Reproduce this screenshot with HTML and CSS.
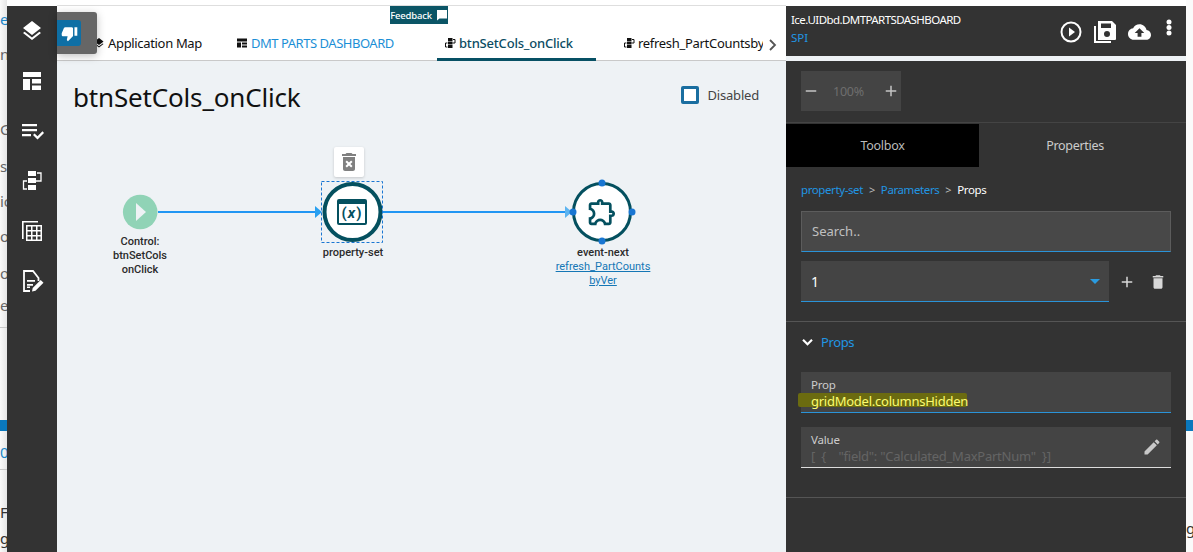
FILE: index.html
```html
<!DOCTYPE html>
<html lang="en">
<head>
<meta charset="utf-8">
<title>btnSetCols_onClick</title>
<link rel="stylesheet" href="styles.css">
</head>
<body>
<div class="app">
  <div class="edge edge-left">
    <span class="frag frag-blue f1">e</span>
    <span class="frag f2">n</span>
    <span class="frag f3">G</span>
    <span class="frag f4">s</span>
    <span class="frag f5">ic</span>
    <span class="frag f6">or</span>
    <span class="frag f7">or</span>
    <span class="frag f8">e</span>
    <div class="edge-rule r1"></div>
    <div class="edge-band b1"></div>
    <span class="frag frag-blue f9">01</span>
    <div class="edge-rule r2"></div>
    <span class="frag f10">F</span>
    <span class="frag f11">g</span>
  </div>

  <nav class="sidebar">
    <svg class="side-icon" viewBox="0 0 24 24"><path d="M11.99 18.54l-7.37-5.73L3 14.07l9 7 9-7-1.63-1.27-7.38 5.74zM12 16l7.36-5.73L21 9l-9-7-9 7 1.63 1.27L12 16z"/></svg>
    <svg class="side-icon" viewBox="0 0 24 24"><path d="M3 3h18v5H3zM3 10h7v11H3zM12 10h9v4.5h-9zM12 16.5h9V21h-9z"/></svg>
    <svg class="side-icon" viewBox="0 0 24 24"><path d="M2 5h15v2.2H2zM2 10h15v2.2H2zM2 15h9v2.2H2zM13 16l1.6-1.6 2.9 2.9 5-5L24 14l-6.500 6.500z"/></svg>
    <svg class="side-icon" viewBox="0 0 24 24"><path d="M8 2h8v5H8zM8 9h8v5H8zM8 16h8v5H8z"/><path d="M17 4h4v8h-5M7 12H3.500v8H7" fill="none" stroke="#fff" stroke-width="1.300"/></svg>
    <svg class="side-icon" viewBox="0 0 24 24"><path d="M2 2h16v1.600H3.600V20H2z"/><path fill-rule="evenodd" d="M6 6h16v16H6zM7.500 7.500V11h3.500V7.500zM12.500 7.500V11h3.500V7.500zM17.500 7.500V11h3V7.500zM7.500 12.500V16h3.500v-3.500zM12.500 12.500V16h3.500v-3.500zM17.500 12.500V16h3v-3.500zM7.500 17.500v3h3.500v-3zM12.500 17.500v3h3.500v-3zM17.500 17.500v3h3v-3z"/></svg>
    <svg class="side-icon" viewBox="0 0 24 24"><path d="M10 22H4V2h9l5.500 7v3" fill="none" stroke="#fff" stroke-width="1.800"/><path d="M7 11h8v1.700H7zM7 15h6v1.700H7zM7 19h3v-1.500H7zM12 22.500l.7-3.500 8-8 2.800 2.800-8 8z"/></svg>
  </nav>

  <main class="main">
    <header class="tabs">
      <div class="tab tab-first">
        <svg class="tab-icon" viewBox="0 0 24 24"><path d="M11.990 18.540l-7.370-5.730L3 14.070l9 7 9-7-1.630-1.270-7.380 5.740zM12 16l7.360-5.730L21 9l-9-7-9 7 1.630 1.270L12 16z"/></svg>
        <span>Application Map</span>
      </div>
      <div class="tab tab-link">
        <svg class="tab-icon" viewBox="0 0 24 24"><path d="M2 3h20v6H2zM2 11h8v10H2zM12 11h10v4H12zM12 17h10v4H12z"/></svg>
        <span>DMT PARTS DASHBOARD</span>
      </div>
      <div class="tab tab-active">
        <svg class="tab-icon" viewBox="0 0 24 24"><path d="M8 2h9v6H8zM8 9h9v6H8zM8 16h9v6H8z"/><path d="M18 5h4v7h-5M7 12H3v8h4" fill="none" stroke="#111" stroke-width="2"/></svg>
        <span>btnSetCols_onClick</span>
      </div>
      <div class="tab tab-clip">
        <svg class="tab-icon" viewBox="0 0 24 24"><path d="M8 2h9v6H8zM8 9h9v6H8zM8 16h9v6H8z"/><path d="M18 5h4v7h-5M7 12H3v8h4" fill="none" stroke="#111" stroke-width="2"/></svg>
        <span class="clip-text">refresh_PartCountsbyVer</span>
      </div>
      <svg class="tab-next" viewBox="0 0 10 14"><path d="M2 2l5 5-5 5" fill="none" stroke="#555" stroke-width="1.800"/></svg>
      <div class="feedback">
        <span>Feedback</span>
        <svg viewBox="0 0 24 24"><path d="M2 2h20v17H7l-5 4z"/></svg>
      </div>
    </header>

    <section class="canvas">
      <div class="canvas-head">
        <h1>btnSetCols_onClick</h1>
        <label class="disabled-box"><span class="check"></span><span>Disabled</span></label>
      </div>

      <svg class="wires" viewBox="0 0 729 491">
        <path d="M101 151H261M326 151H510" stroke="#2196f3" stroke-width="2" fill="none"/>
        <path d="M258 145l7 6-7 6z" fill="#29a0f0"/>
        <path d="M508 145l7 6-7 6z" fill="#5db4f0"/>
        <circle cx="83.200" cy="151" r="17.300" fill="#90d3b6"/>
        <path d="M79 142l10 9-10 9z" fill="#eef2f5"/>
        <circle cx="295.500" cy="151" r="28" fill="#fff" stroke="#04505f" stroke-width="4"/>
        <rect x="264.500" y="120.500" width="61" height="61" fill="none" stroke="#1976d2" stroke-dasharray="3 2"/>
        <rect x="280" y="138" width="30" height="26" rx="2" fill="#04505f"/>
        <rect x="282" y="143" width="26" height="19" fill="#fff"/>
        <circle cx="545" cy="151" r="28.500" fill="#fff" stroke="#04505f" stroke-width="3"/>
        <g transform="translate(529 134.500) scale(1.350)">
          <path d="M10.500 4.500c.28 0 .5.22.5.5v2h6v6h2c.28 0 .5.22.5.5s-.22.5-.5.5h-2v6h-2.120c-.68-1.750-2.390-3-4.380-3s-3.700 1.250-4.380 3H4v-2.120c1.750-.68 3-2.390 3-4.380 0-1.990-1.240-3.700-2.990-4.380L4 7h6V5c0-.28.22-.5.5-.5m0-2C9.120 2.500 8 3.620 8 5H4c-1.100 0-1.990.9-1.990 2v3.800h.29c1.490 0 2.700 1.210 2.700 2.700s-1.210 2.700-2.700 2.700H2V20c0 1.100.9 2 2 2h3.800v-.3c0-1.490 1.210-2.700 2.700-2.700s2.700 1.210 2.700 2.700v.3H17c1.100 0 2-.9 2-2v-4c1.380 0 2.500-1.120 2.500-2.500S20.380 11 19 11V7c0-1.100-.9-2-2-2h-4c0-1.380-1.120-2.500-2.500-2.500z" fill="#04505f"/>
        </g>
        <circle cx="545" cy="122" r="3.500" fill="#1976d2"/>
        <circle cx="545" cy="180" r="3.500" fill="#1976d2"/>
        <circle cx="516" cy="151" r="3.500" fill="#1976d2"/>
        <circle cx="575" cy="151" r="3.500" fill="#1976d2"/>
      </svg>

      <div class="node-card">
        <svg viewBox="0 0 24 24"><path d="M6 19c0 1.100.9 2 2 2h8c1.100 0 2-.9 2-2V7H6v12zm2.460-7.120l1.410-1.410L12 12.590l2.120-2.120 1.410 1.410L13.410 14l2.120 2.120-1.410 1.410L12 15.410l-2.120 2.120-1.410-1.410L10.590 14l-2.130-2.120zM15.500 4l-1-1h-5l-1 1H5v2h14V4z"/></svg>
      </div>
      <span class="var-glyph">(<em>x</em>)</span>
      <div class="node-label l-start">Control:<br>btnSetCols<br>onClick</div>
      <div class="node-label l-set">property-set</div>
      <div class="node-label l-event">event-next<br><a>refresh_PartCounts<br>byVer</a></div>
    </section>
  </main>

  <aside class="panel">
    <header class="panel-head">
      <div class="panel-title">
        <div class="panel-name">Ice.UIDbd.DMTPARTSDASHBOARD</div>
        <div class="panel-sub">SPI</div>
      </div>
      <div class="panel-actions">
        <svg class="act" viewBox="0 0 24 24"><circle cx="12" cy="12" r="9.500" fill="none" stroke="#fff" stroke-width="2"/><path d="M10 7.500l6 4.500-6 4.500z"/></svg>
        <svg class="act" viewBox="0 0 24 24"><path d="M1 6h2v15h15v2H1z"/><path fill-rule="evenodd" d="M5 1h14l4 4v14a1 1 0 0 1-1 1H5zM8 3.500V8h10V3.500zM14 11a3 3 0 1 0 0 6 3 3 0 0 0 0-6z"/></svg>
        <svg class="act act-cloud" viewBox="0 0 24 24"><path d="M19.350 10.040C18.670 6.590 15.640 4 12 4 9.110 4 6.600 5.640 5.350 8.040 2.340 8.360 0 10.910 0 14c0 3.310 2.690 6 6 6h13c2.760 0 5-2.240 5-5 0-2.640-2.050-4.780-4.650-4.960zM14 13v4h-4v-4H7l5-5 5 5h-3z"/></svg>
        <svg class="act act-more" viewBox="0 0 6 17"><circle cx="3" cy="3" r="2.500"/><circle cx="3" cy="8.500" r="2.500"/><circle cx="3" cy="14" r="2.500"/></svg>
      </div>
    </header>
    <div class="panel-gap"></div>

    <div class="zoom-row">
      <div class="zoom-box">
        <svg class="zoom-btn" viewBox="0 0 24 24"><path d="M19 13H5v-2h14v2z"/></svg>
        <span class="zoom-val">100%</span>
        <svg class="zoom-btn" viewBox="0 0 24 24"><path d="M19 13h-6v6h-2v-6H5v-2h6V5h2v6h6v2z"/></svg>
      </div>
    </div>

    <div class="panel-tabs">
      <div class="ptab ptab-on">Toolbox</div>
      <div class="ptab ptab-off">Properties</div>
    </div>

    <div class="crumbs">
      <span class="crumb-link">property-set</span><span class="sep">&gt;</span><span class="crumb-link">Parameters</span><span class="sep">&gt;</span><span class="crumb-now">Props</span>
    </div>

    <div class="search">Search..</div>

    <div class="select-row">
      <div class="select"><span>1</span><i class="caret"></i></div>
      <svg class="row-icon" viewBox="0 0 24 24"><path d="M19 13h-6v6h-2v-6H5v-2h6V5h2v6h6v2z"/></svg>
      <svg class="row-icon" viewBox="0 0 24 24"><path d="M6 19c0 1.100.9 2 2 2h8c1.100 0 2-.9 2-2V7H6v12zM19 4h-3.500l-1-1h-5l-1 1H5v2h14V4z"/></svg>
    </div>

    <section class="props">
      <div class="props-head">
        <svg viewBox="0 0 14 10"><path d="M2 2l5 5 5-5" fill="none" stroke="#fff" stroke-width="2.400"/></svg>
        <span>Props</span>
      </div>
      <div class="field field-prop">
        <span class="field-label">Prop</span>
        <span class="field-val">gridModel.columnsHidden</span>
        <i class="marker"></i>
      </div>
      <div class="field field-value">
        <div class="field-body">
          <span class="field-label">Value</span>
          <span class="field-val dim">[ &nbsp;{ &nbsp; &nbsp;"field": "Calculated_MaxPartNum" &nbsp;}]</span>
        </div>
        <svg viewBox="0 0 24 24"><path d="M3 17.250V21h3.750L17.810 9.940l-3.750-3.750L3 17.250zM20.710 7.040c.39-.39.39-1.020 0-1.410l-2.340-2.340c-.39-.39-1.020-.39-1.410 0l-1.830 1.830 3.750 3.750 1.830-1.830z"/></svg>
      </div>
    </section>
  </aside>

  <div class="edge edge-right">
    <div class="edge-band b2"></div>
    <span class="frag f12">g</span>
  </div>

  <div class="thumb-tip">
    <div class="thumb-btn">
      <svg viewBox="0 0 24 24"><path d="M15 3H6c-.83 0-1.540.5-1.840 1.220l-3.020 7.050c-.09.23-.14.47-.14.730v2c0 1.100.9 2 2 2h6.310l-.95 4.570-.03.32c0 .41.17.79.44 1.060L9.830 23l6.590-6.590c.36-.36.58-.86.58-1.410V5c0-1.100-.9-2-2-2zm4 0v12h4V3h-4z"/></svg>
    </div>
  </div>
</div>
</body>
</html>
```
FILE: styles.css
```css
* { box-sizing: border-box; }
html, body { margin: 0; height: 100%; overflow: hidden; background: #fff; }
body { font-family: "Noto Sans", sans-serif; color: #111; }

.app {
  position: relative;
  display: flex;
  height: 552px;
  width: 1193px;
  overflow: hidden;
}

/* page peeking out on both sides of the modal */
.edge {
  width: 7px;
  flex: none;
  display: flex;
  flex-direction: column;
  overflow: hidden;
  font-size: 15px;
  line-height: 18px;
  color: #666;
}
.edge-left { background: linear-gradient(to right, #fafafa, #e6e6e6); }
.edge-right { background: #fafafa; }
.frag { display: block; height: 18px; white-space: nowrap; }
.frag-blue { color: #1b86c8; }
.f1 { margin-top: 10px; }
.f2 { margin-top: 17px; }
.f3 { margin-top: 57px; }
.f4 { margin-top: 19px; }
.f5 { margin-top: 17px; }
.f6 { margin-top: 17px; }
.f7 { margin-top: 19px; }
.f8 { margin-top: 14px; }
.edge-rule { height: 1px; width: 100%; background: #c8c8c8; flex: none; }
.r1 { margin-top: 13px; }
.edge-band { height: 11px; width: 100%; background: #0a78bd; flex: none; }
.b1 { margin-top: 92px; }
.f9 { margin-top: 12px; }
.r2 { margin-top: 8px; }
.f10 { margin-top: 33px; color: #333; }
.f11 { margin-top: 8px; color: #333; }
.b2 { margin-top: 420px; }
.f12 { margin-top: 88px; color: #333; }

.sidebar {
  width: 50px;
  flex: none;
  margin-top: 6px;
  background: #333;
  display: flex;
  flex-direction: column;
  align-items: center;
  gap: 26px;
  padding-top: 13px;
}
.side-icon { width: 24px; height: 24px; fill: #fff; flex: none; }

.main {
  width: 729px;
  flex: none;
  margin-top: 5px;
  border-top: 1px solid #dedede;
  display: flex;
  flex-direction: column;
  background: #fff;
}
.tabs {
  position: relative;
  height: 55px;
  flex: none;
  display: flex;
  align-items: flex-end;
  border-bottom: 1px solid #c9c9c9;
  background: #fff;
}
.tab {
  display: flex;
  align-items: center;
  gap: 3px;
  height: 36px;
  padding-top: 1px;
  font-size: 13px;
  white-space: nowrap;
}
.tab-icon { width: 12px; height: 12px; fill: #111; flex: none; }
.tab-first { margin-left: 36px; width: 143px; letter-spacing: -.33px; }
.tab-link { color: #1c8fd6; width: 201px; letter-spacing: -.47px; }
.tab-active {
  width: 159px;
  padding: 3px 0 0 7px;
  color: #0b4c63;
  font-weight: 500;
  letter-spacing: -.2px;
  border-bottom: 3px solid #075064;
  margin-bottom: -1px;
  height: 37px;
}
.tab-clip { margin-left: 27px; width: 140px; letter-spacing: -.3px; }
.clip-text { overflow: hidden; }
.tab-next { width: 10px; height: 14px; margin: 0 0 8px 5px; flex: none; }

.feedback {
  position: absolute;
  left: 333px;
  top: 0;
  width: 58px;
  height: 18px;
  background: #0b5566;
  color: #fff;
  font-size: 9.500px;
  font-weight: 500;
  letter-spacing: -.2px;
  display: flex;
  align-items: center;
  justify-content: center;
  gap: 4px;
}
.feedback svg { width: 12px; height: 12px; fill: #fff; }

.canvas {
  position: relative;
  flex: 1;
  background: #eef2f5;
}
.canvas-head {
  display: flex;
  justify-content: space-between;
  align-items: flex-start;
  padding: 17px 27px 0 16px;
}
.canvas-head h1 {
  margin: 0;
  font-size: 26px;
  font-weight: 400;
  line-height: 38px;
  letter-spacing: -.17px;
  color: #111;
}
.disabled-box {
  display: flex;
  align-items: center;
  gap: 9px;
  margin-top: 8px;
  font-size: 13px;
  letter-spacing: -.2px;
  color: #444;
}
.check {
  width: 18px;
  height: 18px;
  border: 3px solid #1a6ea0;
  border-radius: 2px;
  background: #fff;
}
.wires {
  position: absolute;
  left: 0;
  top: 0;
  width: 729px;
  height: 491px;
}
.node-card {
  position: absolute;
  left: 277px;
  top: 86px;
  width: 30px;
  height: 30px;
  background: #fff;
  border-radius: 2px;
  box-shadow: 0 1px 3px rgba(0, 0, 0, .18);
  display: flex;
  align-items: center;
  justify-content: center;
}
.node-card svg { width: 24px; height: 24px; fill: #808080; }
.var-glyph {
  position: absolute;
  left: 280px;
  top: 143px;
  width: 30px;
  text-align: center;
  font-family: "Roboto", sans-serif;
  font-size: 15px;
  line-height: 19px;
  font-weight: 700;
  letter-spacing: 1px;
  color: #04505f;
}
.node-label {
  position: absolute;
  text-align: center;
  font-family: "Roboto", sans-serif;
  font-size: 11px;
  font-weight: 500;
  line-height: 14px;
  color: #2b2b2b;
  white-space: nowrap;
}
.node-label a { color: #1577b5; font-weight: 400; text-decoration: underline; }
.l-start { left: 33px; width: 100px; top: 174px; }
.l-set { left: 246px; width: 100px; top: 185px; }
.l-event { left: 496px; width: 100px; top: 185px; }

.panel {
  width: 400px;
  flex: none;
  margin-top: 6px;
  background: #333;
  color: #fff;
  display: flex;
  flex-direction: column;
  font-size: 13px;
}
.panel-head {
  height: 50px;
  flex: none;
  display: flex;
  justify-content: space-between;
  padding: 5px 14px 0 5px;
}
.panel-name { font-size: 11.500px; line-height: 18px; letter-spacing: -.57px; }
.panel-sub { font-size: 11.500px; line-height: 18px; color: #2196e3; }
.panel-actions { display: flex; align-items: flex-start; gap: 10px; padding-top: 9px; }
.act { fill: #fff; flex: none; width: 24px; height: 24px; }
.act-cloud { width: 23px; margin-left: 1px; }
.act-more { width: 6px; height: 17px; margin: -1px 0 0 5px; }

.panel-gap { height: 5px; flex: none; background: #eef2f5; }

.zoom-row {
  height: 62px;
  flex: none;
  padding: 10px 15px 0;
  border-bottom: 1px solid #444;
}
.zoom-box {
  width: 100px;
  height: 40px;
  background: #444;
  display: flex;
  align-items: center;
  justify-content: space-between;
  padding: 0 1px;
}
.zoom-btn { width: 18px; height: 18px; fill: #c4c4c4; flex: none; }
.zoom-val { font-size: 12.500px; letter-spacing: -.2px; color: #6e6e6e; margin-right: 10px; margin-left: 5px; }

.panel-tabs { display: flex; height: 43px; flex: none; margin-top: 1px; }
.ptab {
  display: flex;
  align-items: center;
  justify-content: center;
  font-size: 12.500px;
  letter-spacing: -.3px;
}
.ptab-on { width: 193px; background: #000; color: #bbb; }
.ptab-off { width: 192px; color: #ccc; }

.crumbs {
  padding: 0 15px;
  height: 44px;
  flex: none;
  display: flex;
  align-items: center;
  font-size: 11.500px;
  letter-spacing: -.4px;
}
.crumb-link { color: #2196e3; }
.crumb-now { color: #fff; }
.sep { margin: 0 6px; color: #bbb; font-size: 11px; }

.search {
  margin: 0 15px;
  height: 41px;
  flex: none;
  background: #484848;
  border: 1px solid #5c5c5c;
  border-bottom: 1px solid #2a93d8;
  padding: 0 10px 2px;
  display: flex;
  align-items: center;
  color: #c0c0c0;
  font-size: 13px;
}
.select-row {
  margin: 9px 15px 0;
  height: 41px;
  flex: none;
  display: flex;
  align-items: center;
}
.select {
  width: 308px;
  height: 41px;
  background: #444;
  border-bottom: 1px solid #2a93d8;
  display: flex;
  align-items: center;
  justify-content: space-between;
  padding: 0 9px 0 10px;
  font-size: 14px;
}
.caret {
  width: 0;
  height: 0;
  border: 5px solid transparent;
  border-top: 5px solid #2a9be0;
  border-bottom: 0;
}
.row-icon { width: 18px; height: 18px; fill: #d8d8d8; margin-left: 9px; flex: none; }
.row-icon + .row-icon { margin-left: 13px; }

.props {
  margin-top: 19px;
  height: 177px;
  flex: none;
  border-top: 1px solid #555;
  border-bottom: 1px solid #555;
  padding: 0 15px;
}
.props-head {
  height: 50px;
  padding-bottom: 10px;
  display: flex;
  align-items: center;
  gap: 7px;
  font-size: 13px;
  letter-spacing: -.4px;
  color: #2196e3;
}
.props-head svg { width: 13px; height: 9px; }
.field {
  position: relative;
  height: 41px;
  background: #444;
  padding: 5px 10px 0;
  display: flex;
  flex-direction: column;
  font-size: 11.500px;
  line-height: 16px;
}
.field-label { color: #ccc; font-size: 11.500px; letter-spacing: -.2px; }
.field-val { font-size: 13px; line-height: 16px; white-space: nowrap; letter-spacing: -.25px; }
.field-prop { border-bottom: 1px solid #2a93d8; }
.field-prop .field-val { color: #fbfb70; position: relative; z-index: 1; }
.marker {
  position: absolute;
  left: -3px;
  top: 21px;
  width: 169px;
  height: 14px;
  background: #6b6b10;
  border-radius: 2px;
}
.field-value {
  margin-top: 14px;
  border-bottom: 1px solid #ddd;
  flex-direction: row;
  justify-content: space-between;
  align-items: flex-start;
}
.field-body { display: flex; flex-direction: column; }
.dim { color: #646464; }
.field-value svg { width: 20px; height: 20px; fill: #c8c8c8; margin: 5px -1px 0 0; }

.thumb-tip {
  position: absolute;
  left: 57px;
  top: 12px;
  width: 40px;
  height: 42px;
  background: #666;
  border-radius: 0 3px 3px 0;
  box-shadow: 0 2px 8px rgba(0, 0, 0, .25);
  padding-top: 8px;
}
.thumb-btn {
  width: 24px;
  height: 26px;
  background: #0e6fa5;
  border-radius: 0 3px 3px 0;
  display: flex;
  align-items: center;
  justify-content: center;
}
.thumb-btn svg { width: 17px; height: 17px; fill: #fff; }
```
